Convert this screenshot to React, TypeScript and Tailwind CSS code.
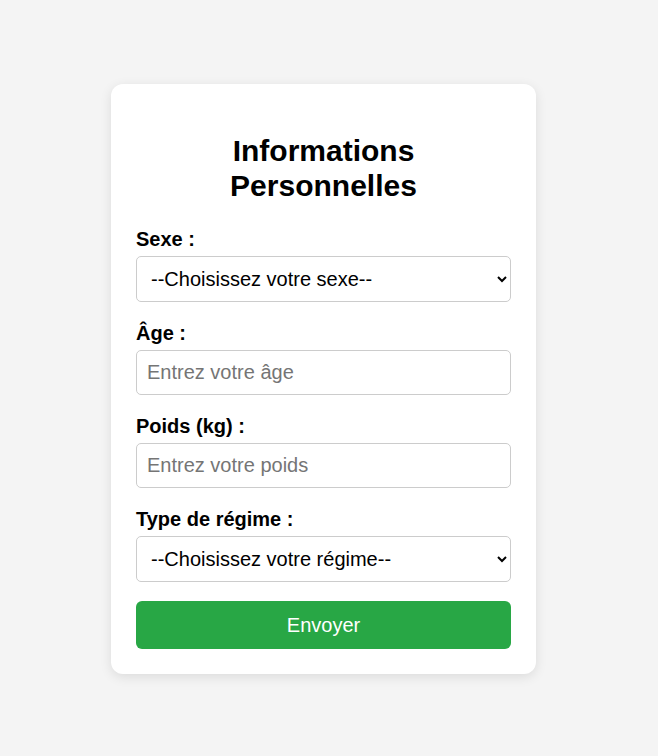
export default function App() {
  return (
    <div className="min-h-screen bg-[#f4f4f4] flex items-start pt-[84px] font-['Liberation_Sans',Arial,sans-serif] text-black">
      <div className="ml-[111px] w-[425px] bg-white rounded-[12px] p-[25px] shadow-[0_3px_12px_rgba(0,0,0,0.1)]">
        <h2 className="text-center text-[30px] font-bold leading-[34.5px] mt-[25px] mb-[25px]">
          Informations
          <br />
          Personnelles
        </h2>
        <form className="flex flex-col" onSubmit={(e) => e.preventDefault()}>
          <label htmlFor="sexe" className="text-[20px] font-bold leading-[23px] mb-[5px]">
            Sexe :
          </label>
          <select
            id="sexe"
            defaultValue=""
            className="h-[46px] border border-[#ccc] rounded-[5px] px-[10px] text-[20px] text-black bg-white mb-[20px]"
          >
            <option value="">--Choisissez votre sexe--</option>
            <option value="homme">Homme</option>
            <option value="femme">Femme</option>
          </select>

          <label htmlFor="age" className="text-[20px] font-bold leading-[23px] mb-[5px]">
            Âge :
          </label>
          <input
            id="age"
            type="number"
            placeholder="Entrez votre âge"
            className="h-[45px] border border-[#ccc] rounded-[5px] px-[10px] text-[20px] placeholder:text-[#757575] mb-[20px]"
          />

          <label htmlFor="poids" className="text-[20px] font-bold leading-[23px] mb-[5px]">
            Poids (kg) :
          </label>
          <input
            id="poids"
            type="number"
            placeholder="Entrez votre poids"
            className="h-[45px] border border-[#ccc] rounded-[5px] px-[10px] text-[20px] placeholder:text-[#757575] mb-[20px]"
          />

          <label htmlFor="regime" className="text-[20px] font-bold leading-[23px] mb-[5px]">
            Type de régime :
          </label>
          <select
            id="regime"
            defaultValue=""
            className="h-[46px] border border-[#ccc] rounded-[5px] px-[10px] text-[20px] text-black bg-white mb-[19px]"
          >
            <option value="">--Choisissez votre régime--</option>
            <option value="vegetarien">Végétarien</option>
            <option value="vegan">Végan</option>
            <option value="omnivore">Omnivore</option>
          </select>

          <button
            type="submit"
            className="h-[48px] bg-[#28a745] text-white text-[20px] rounded-[6px]"
          >
            Envoyer
          </button>
        </form>
      </div>
    </div>
  );
}
